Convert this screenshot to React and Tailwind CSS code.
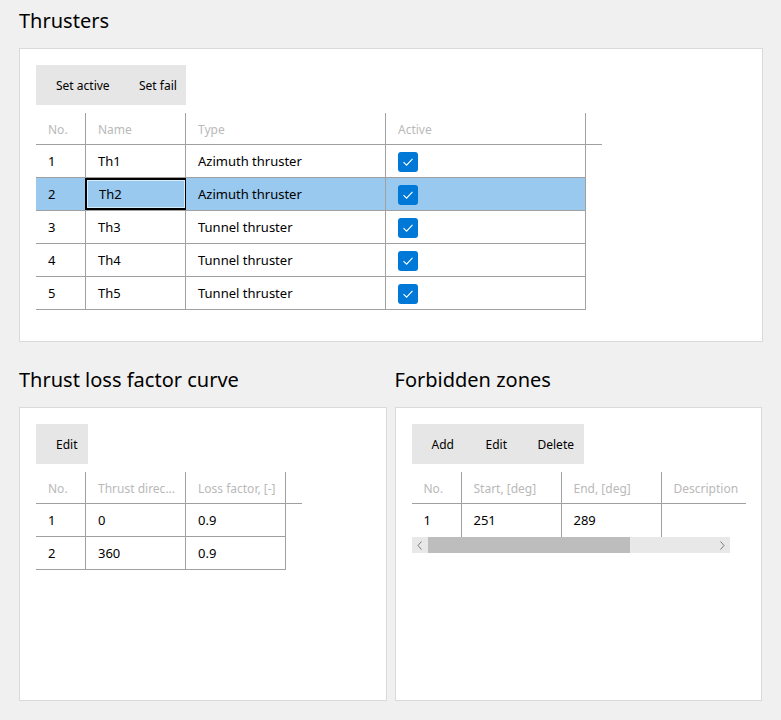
import React from "react";

const font = { fontFamily: '"Segoe UI", "Noto Sans", "Open Sans", sans-serif' };

function Check() {
  return (
    <div className="w-5 h-5 rounded-[3px] bg-[#0078d7] flex items-center justify-center">
      <svg width="14" height="14" viewBox="0 0 14 14">
        <path d="M2.5 7.2 L5.6 10.2 L11.5 3.8" fill="none" stroke="white" strokeWidth="1.1" />
      </svg>
    </div>
  );
}

function Toolbar({ items }) {
  return (
    <div className="inline-flex h-10 bg-[#e6e6e6] items-center text-[12px] text-black">
      {items.map(([t, w]) => (
        <span key={t} className="pl-5 pt-px whitespace-nowrap" style={{ width: w }}>
          {t}
        </span>
      ))}
    </div>
  );
}

function Header({ cols, extra }) {
  return (
    <div className="flex h-[32px] border-b border-[#a0a0a0]" style={{ width: extra }}>
      {cols.map((c, i) => (
        <div
          key={i}
          className={`h-full flex items-center pl-3 pt-[3px] text-[12px] text-[#b9b9b9] whitespace-nowrap overflow-hidden shrink-0 ${
            c.last ? "" : "border-r border-[#a0a0a0]"
          }`}
          style={{ width: c.w }}
        >
          {c.label}
        </div>
      ))}
    </div>
  );
}

function Row({ cells, widths, selected, focusIdx }) {
  return (
    <div className={`flex h-[33px] border-b border-[#a0a0a0] ${selected ? "bg-[#99c9ef]" : ""}`}>
      {cells.map((c, i) => (
        <div
          key={i}
          className={`h-full flex items-center text-[13px] text-black pl-3 pt-px shrink-0 border-r border-[#a0a0a0] ${
            focusIdx === i ? "border-2 border-black -ml-px shadow-[inset_0_0_0_1px_#d7ecfb]" : ""
          }`}
          style={{ width: widths[i] + (focusIdx === i ? 1 : 0) }}
        >
          {c}
        </div>
      ))}
    </div>
  );
}

function Panel({ title, children, className }) {
  return (
    <div className={`flex flex-col ${className}`}>
      <div className="h-[48px] text-[20px] text-black leading-none pt-[11px]">{title}</div>
      <div className="flex-1 bg-white border border-[#d9d9d9] pt-4 pl-4">{children}</div>
    </div>
  );
}

export default function App() {
  const thr = [
    ["1", "Th1", "Azimuth thruster"],
    ["2", "Th2", "Azimuth thruster"],
    ["3", "Th3", "Tunnel thruster"],
    ["4", "Th4", "Tunnel thruster"],
    ["5", "Th5", "Tunnel thruster"],
  ];
  const w1 = [50, 100, 200, 200];
  return (
    <div className="w-[781px] h-[720px] bg-[#f0f0f0] px-[19px] overflow-hidden" style={font}>
      <Panel title="Thrusters" className="h-[342px] w-[744px]">
        <Toolbar items={[["Set active", 83], ["Set fail", 67]]} />
        <div className="mt-2">
          <Header
            extra={566}
            cols={[
              { label: "No.", w: 50 },
              { label: "Name", w: 100 },
              { label: "Type", w: 200 },
              { label: "Active", w: 200 },
              { label: "", w: 16, last: true },
            ]}
          />
          {thr.map((r, i) => (
            <div key={i} className="w-[550px]">
              <Row
                widths={w1}
                selected={i === 1}
                focusIdx={i === 1 ? 1 : -1}
                cells={[r[0], r[1], r[2], <Check key="c" />]}
              />
            </div>
          ))}
        </div>
      </Panel>

      <div className="flex gap-[8px] mt-[17px]">
        <Panel title="Thrust loss factor curve" className="h-[342px] w-[368px]">
          <Toolbar items={[["Edit", 52]]} />
          <div className="mt-2">
            <Header
              extra={266}
              cols={[
                { label: "No.", w: 50 },
                { label: "Thrust direc...", w: 100 },
                { label: "Loss factor, [-]", w: 100 },
                { label: "", w: 16, last: true },
              ]}
            />
            {[
              ["1", "0", "0.9"],
              ["2", "360", "0.9"],
            ].map((r, i) => (
              <div key={i} className="w-[250px]">
                <Row widths={[50, 100, 100]} cells={r} />
              </div>
            ))}
          </div>
        </Panel>

        <Panel title="Forbidden zones" className="h-[342px] w-[368px]">
          <Toolbar items={[["Add", 54], ["Edit", 52], ["Delete", 66]]} />
          <div className="mt-2 w-[334px] overflow-hidden">
            <Header
              extra={334}
              cols={[
                { label: "No.", w: 50 },
                { label: "Start, [deg]", w: 100 },
                { label: "End, [deg]", w: 100 },
                { label: "Description", w: 84, last: true },
              ]}
            />
            <div className="w-[318px] overflow-hidden">
              <div className="flex h-[33px]">
                {[
                  ["1", 50],
                  ["251", 100],
                  ["289", 100],
                  ["", 68],
                ].map(([t, w], i) => (
                  <div
                    key={i}
                    className={`h-full flex items-center pl-3 pt-px text-[13px] text-black shrink-0 ${
                      i < 3 ? "border-r border-[#a0a0a0]" : ""
                    }`}
                    style={{ width: w }}
                  >
                    {t}
                  </div>
                ))}
              </div>
              <div className="flex h-[16px] bg-[#e8e8e8] items-center">
                <div className="w-4 h-full flex items-center justify-center">
                  <svg width="6" height="9" viewBox="0 0 6 9">
                    <path d="M4.5 0.5 L1 4.5 L4.5 8.5" fill="none" stroke="#7a7a7a" strokeWidth="1" />
                  </svg>
                </div>
                <div className="w-[202px] h-full bg-[#bdbdbd]" />
                <div className="flex-1" />
                <div className="w-4 h-full flex items-center justify-center">
                  <svg width="6" height="9" viewBox="0 0 6 9">
                    <path d="M1.5 0.5 L5 4.5 L1.5 8.5" fill="none" stroke="#7a7a7a" strokeWidth="1" />
                  </svg>
                </div>
              </div>
            </div>
          </div>
        </Panel>
      </div>
    </div>
  );
}
